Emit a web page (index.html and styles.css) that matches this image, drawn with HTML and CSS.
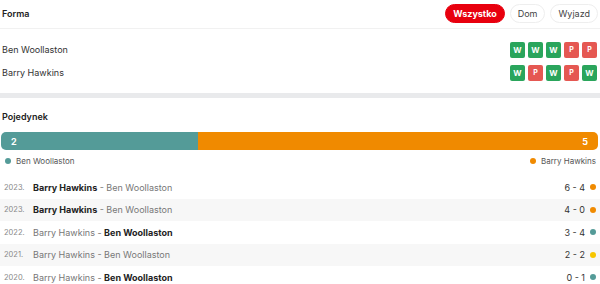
FILE: index.html
```html
<!DOCTYPE html>
<html lang="pl">
<head>
<meta charset="utf-8">
<link rel="stylesheet" href="styles.css">
</head>
<body>
<div class="page">
  <div class="header">
    <div class="title">Forma</div>
    <div class="tabs">
      <span class="tab active">Wszystko</span>
      <span class="tab">Dom</span>
      <span class="tab">Wyjazd</span>
    </div>
  </div>
  <div class="form">
    <div class="form-row">
      <span class="player">Ben Woollaston</span>
      <div class="badges">
        <span class="badge w">W</span><span class="badge w">W</span><span class="badge w">W</span><span class="badge p">P</span><span class="badge p">P</span>
      </div>
    </div>
    <div class="form-row">
      <span class="player">Barry Hawkins</span>
      <div class="badges">
        <span class="badge w">W</span><span class="badge p">P</span><span class="badge w">W</span><span class="badge p">P</span><span class="badge w">W</span>
      </div>
    </div>
  </div>
  <div class="divider"></div>
  <div class="h2h">
    <div class="title">Pojedynek</div>
    <div class="bar">
      <div class="bar-left" style="width:197px">2</div>
      <div class="bar-right">5</div>
    </div>
    <div class="legend">
      <span class="leg"><i class="dot teal"></i>Ben Woollaston</span>
      <span class="leg"><i class="dot orange"></i>Barry Hawkins</span>
    </div>
    <div class="matches">
      <div class="match">
        <span class="year">2023.</span>
        <span class="names"><b>Barry Hawkins</b> - Ben Woollaston</span>
        <span class="score">6 - 4</span><i class="dot orange"></i>
      </div>
      <div class="match alt">
        <span class="year">2023.</span>
        <span class="names"><b>Barry Hawkins</b> - Ben Woollaston</span>
        <span class="score">4 - 0</span><i class="dot orange"></i>
      </div>
      <div class="match">
        <span class="year">2022.</span>
        <span class="names">Barry Hawkins - <b>Ben Woollaston</b></span>
        <span class="score">3 - 4</span><i class="dot teal"></i>
      </div>
      <div class="match alt">
        <span class="year">2021.</span>
        <span class="names">Barry Hawkins - Ben Woollaston</span>
        <span class="score">2 - 2</span><i class="dot yellow"></i>
      </div>
      <div class="match">
        <span class="year">2020.</span>
        <span class="names">Barry Hawkins - <b>Ben Woollaston</b></span>
        <span class="score">0 - 1</span><i class="dot teal"></i>
      </div>
    </div>
  </div>
</div>
</body>
</html>
```
FILE: styles.css
```css
* { box-sizing: border-box; }
body {
  margin: 0;
  background: #fff;
  font-family: Inter, "Noto Sans", sans-serif;
  color: #333;
  font-size: 9px;
}
.page { width: 600px; }
.header {
  height: 29px;
  display: flex;
  align-items: center;
  justify-content: space-between;
  padding: 0 2px 2px 2px;
  border-bottom: 1px solid #f1f1f1;
}
.title {
  font-size: 9px;
  font-weight: 600;
  color: #222;
}
.tabs { display: flex; gap: 5px; }
.tab {
  height: 19px;
  padding: 0 7px;
  border-radius: 10px;
  border: 1px solid #eeeeee;
  display: flex;
  align-items: center;
  font-size: 9px;
  color: #444;
}
.tab.active {
  background: #e8000e;
  border-color: #e8000e;
  color: #fff;
  font-weight: 700;
}
.form { padding: 9px 3px 9px 2px; }
.form-row {
  height: 23px;
  display: flex;
  align-items: center;
  justify-content: space-between;
}
.player { font-size: 9px; color: #333; }
.badges { display: flex; gap: 3px; }
.badge {
  width: 15px;
  height: 16px;
  border-radius: 2px;
  display: flex;
  align-items: center;
  justify-content: center;
  color: #fff;
  font-weight: 700;
  font-size: 8px;
}
.badge.w { background: #2aa55c; }
.badge.p { background: #e55852; font-size: 7px; }
.divider { height: 5px; background: #e9eaec; }
.h2h { padding: 11px 2px 0 1px; }
.h2h .title { padding-left: 1px; height: 15px; line-height: 15px; }
.bar {
  margin-top: 8px;
  height: 18px;
  display: flex;
  border-radius: 5px;
  overflow: hidden;
  color: #fff;
  font-weight: 700;
  font-size: 9px;
}
.bar-left {
  background: #549b98;
  display: flex;
  align-items: center;
  padding-left: 10px;
}
.bar-right {
  flex: 1;
  background: #f08a00;
  display: flex;
  align-items: center;
  justify-content: flex-end;
  padding-right: 10px;
}
.legend {
  height: 21px;
  display: flex;
  justify-content: space-between;
  align-items: center;
  font-size: 8px;
  color: #555;
  padding: 0 2px 0 4px;
}
.leg { display: flex; align-items: center; gap: 5px; }
.dot {
  display: inline-block;
  width: 6px;
  height: 6px;
  border-radius: 50%;
}
.dot.teal { background: #549b98; }
.dot.orange { background: #f08a00; }
.dot.yellow { background: #f7c600; }
.matches { margin: 5px -2px 0 -1px; }
.match {
  height: 22.5px;
  display: flex;
  align-items: center;
  padding: 0 4px 0 4px;
}
.match.alt { background: #f7f7f7; }
.year {
  width: 29px;
  font-size: 7.5px;
  color: #888;
}
.names {
  flex: 1;
  font-size: 9px;
  color: #777;
}
.names b { color: #222; font-weight: 700; }
.score {
  font-size: 9px;
  color: #333;
  margin-right: 5px;
}
```
